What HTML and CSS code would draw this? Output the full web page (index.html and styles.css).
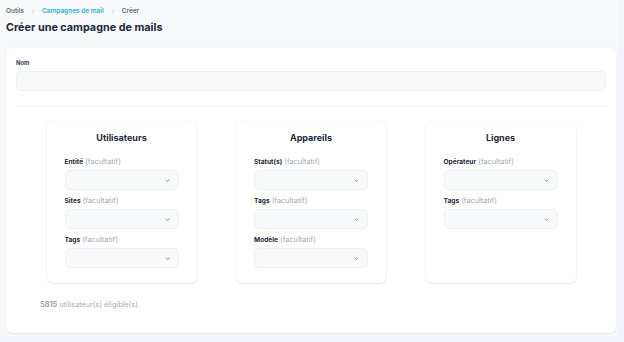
FILE: index.html
```html
<!DOCTYPE html>
<html lang="fr">
<head>
<meta charset="utf-8">
<link rel="stylesheet" href="styles.css">
</head>
<body>
<div class="page">
  <nav class="crumbs">
    <span class="crumb">Outils</span>
    <svg class="sep" viewBox="0 0 6 8" width="4" height="6"><path d="M1.5 1 L4.5 4 L1.5 7" fill="none" stroke="#c5cad2" stroke-width="1"/></svg>
    <span class="crumb active">Campagnes de mail</span>
    <svg class="sep" viewBox="0 0 6 8" width="4" height="6"><path d="M1.5 1 L4.5 4 L1.5 7" fill="none" stroke="#c5cad2" stroke-width="1"/></svg>
    <span class="crumb">Créer</span>
  </nav>
  <h1 class="title">Créer une campagne de mails</h1>
  <section class="card">
    <label class="name-label">Nom</label>
    <div class="input"></div>
    <div class="divider"></div>
    <div class="groups">
      <div class="group">
        <h2 class="group-title">Utilisateurs</h2>
        <div class="field"><div class="label"><b>Entité</b> (facultatif)</div><div class="select"><svg class="chev" viewBox="0 0 8 5" width="5" height="3"><path d="M1 1 L4 4 L7 1" fill="none" stroke="#4b5563" stroke-width="1.1"/></svg></div></div>
        <div class="field"><div class="label"><b>Sites</b> (facultatif)</div><div class="select"><svg class="chev" viewBox="0 0 8 5" width="5" height="3"><path d="M1 1 L4 4 L7 1" fill="none" stroke="#4b5563" stroke-width="1.1"/></svg></div></div>
        <div class="field"><div class="label"><b>Tags</b> (facultatif)</div><div class="select"><svg class="chev" viewBox="0 0 8 5" width="5" height="3"><path d="M1 1 L4 4 L7 1" fill="none" stroke="#4b5563" stroke-width="1.1"/></svg></div></div>
      </div>
      <div class="group">
        <h2 class="group-title">Appareils</h2>
        <div class="field"><div class="label"><b>Statut(s)</b> (facultatif)</div><div class="select"><svg class="chev" viewBox="0 0 8 5" width="5" height="3"><path d="M1 1 L4 4 L7 1" fill="none" stroke="#4b5563" stroke-width="1.1"/></svg></div></div>
        <div class="field"><div class="label"><b>Tags</b> (facultatif)</div><div class="select"><svg class="chev" viewBox="0 0 8 5" width="5" height="3"><path d="M1 1 L4 4 L7 1" fill="none" stroke="#4b5563" stroke-width="1.1"/></svg></div></div>
        <div class="field"><div class="label"><b>Modèle</b> (facultatif)</div><div class="select"><svg class="chev" viewBox="0 0 8 5" width="5" height="3"><path d="M1 1 L4 4 L7 1" fill="none" stroke="#4b5563" stroke-width="1.1"/></svg></div></div>
      </div>
      <div class="group">
        <h2 class="group-title">Lignes</h2>
        <div class="field"><div class="label"><b>Opérateur</b> (facultatif)</div><div class="select"><svg class="chev" viewBox="0 0 8 5" width="5" height="3"><path d="M1 1 L4 4 L7 1" fill="none" stroke="#4b5563" stroke-width="1.1"/></svg></div></div>
        <div class="field"><div class="label"><b>Tags</b> (facultatif)</div><div class="select"><svg class="chev" viewBox="0 0 8 5" width="5" height="3"><path d="M1 1 L4 4 L7 1" fill="none" stroke="#4b5563" stroke-width="1.1"/></svg></div></div>
      </div>
    </div>
    <p class="count"><b>5815</b> utilisateur(s) éligible(s)</p>
  </section>
</div>
</body>
</html>
```
FILE: styles.css
```css
* { box-sizing: border-box; }
html, body { margin: 0; padding: 0; }
body {
  background: #f1f4f8;
  font-family: Inter, "Noto Sans", sans-serif;
  color: #1f2937;
  width: 624px;
  height: 342px;
  overflow: hidden;
}
.page {
  width: 618px;
  height: 336px;
  background: #f8f9fb;
  padding: 5px 2px 0 6px;
  display: flex;
  flex-direction: column;
}
.crumbs {
  display: flex;
  align-items: center;
  gap: 7px;
  height: 10px;
  margin-top: 1px;
  font-size: 6.5px;
  line-height: 10px;
}
.crumb { color: #4b5563; font-weight: 500; }
.crumb.active { color: #27b5c8; font-weight: 600; }
.sep { display: block; }
.title {
  margin: 5px 0 0 0;
  font-size: 10.8px;
  line-height: 14px;
  font-weight: 700;
  color: #1e293b;
}
.card {
  margin-top: 13px;
  width: 610px;
  height: 285px;
  background: #fff;
  border-radius: 6px;
  box-shadow: 0 1px 2px rgba(15, 23, 42, 0.06), 0 0 0 0.5px rgba(15, 23, 42, 0.03);
  padding: 11px 10px 0 10px;
  display: flex;
  flex-direction: column;
}
.name-label {
  font-size: 5.8px;
  line-height: 8px;
  font-weight: 700;
  color: #374151;
}
.input {
  margin-top: 4px;
  height: 20px;
  background: #f8fafc;
  border: 1px solid #eef1f5;
  border-radius: 5px;
}
.divider {
  margin-top: 15px;
  height: 1px;
  background: #f1f3f6;
}
.groups {
  margin-top: 15px;
  display: grid;
  grid-template-columns: repeat(3, 150px);
  justify-content: center;
  column-gap: 39.5px;
}
.group {
  height: 161px;
  background: #fff;
  border-radius: 6px;
  box-shadow: 0 1px 2px rgba(15, 23, 42, 0.08), 0 0 0 0.5px rgba(15, 23, 42, 0.05);
  padding: 10px 18px 0 18px;
  display: flex;
  flex-direction: column;
}
.group-title {
  margin: 0 0 6px 0;
  text-align: center;
  font-size: 9px;
  line-height: 12px;
  font-weight: 700;
  color: #1e293b;
}
.field { margin-top: 8px; }
.field + .field { margin-top: 7px; }
.label {
  font-size: 7.3px;
  line-height: 8px;
  color: #a3a9b3;
  margin-bottom: 4px;
  white-space: nowrap;
  text-align: left;
}
.label b { color: #1f2937; font-weight: 700; font-size: 6.6px; }
.select {
  height: 20px;
  background: #f9fafb;
  border: 1px solid #eef1f5;
  border-radius: 5px;
  display: flex;
  align-items: center;
  justify-content: flex-end;
  padding-right: 8px;
}
.chev { display: block; }
.count {
  margin: 18px 0 0 24px;
  font-size: 7.3px;
  line-height: 8px;
  color: #a8aeb7;
}
.count b { color: #9ca3af; font-weight: 700; }
```
